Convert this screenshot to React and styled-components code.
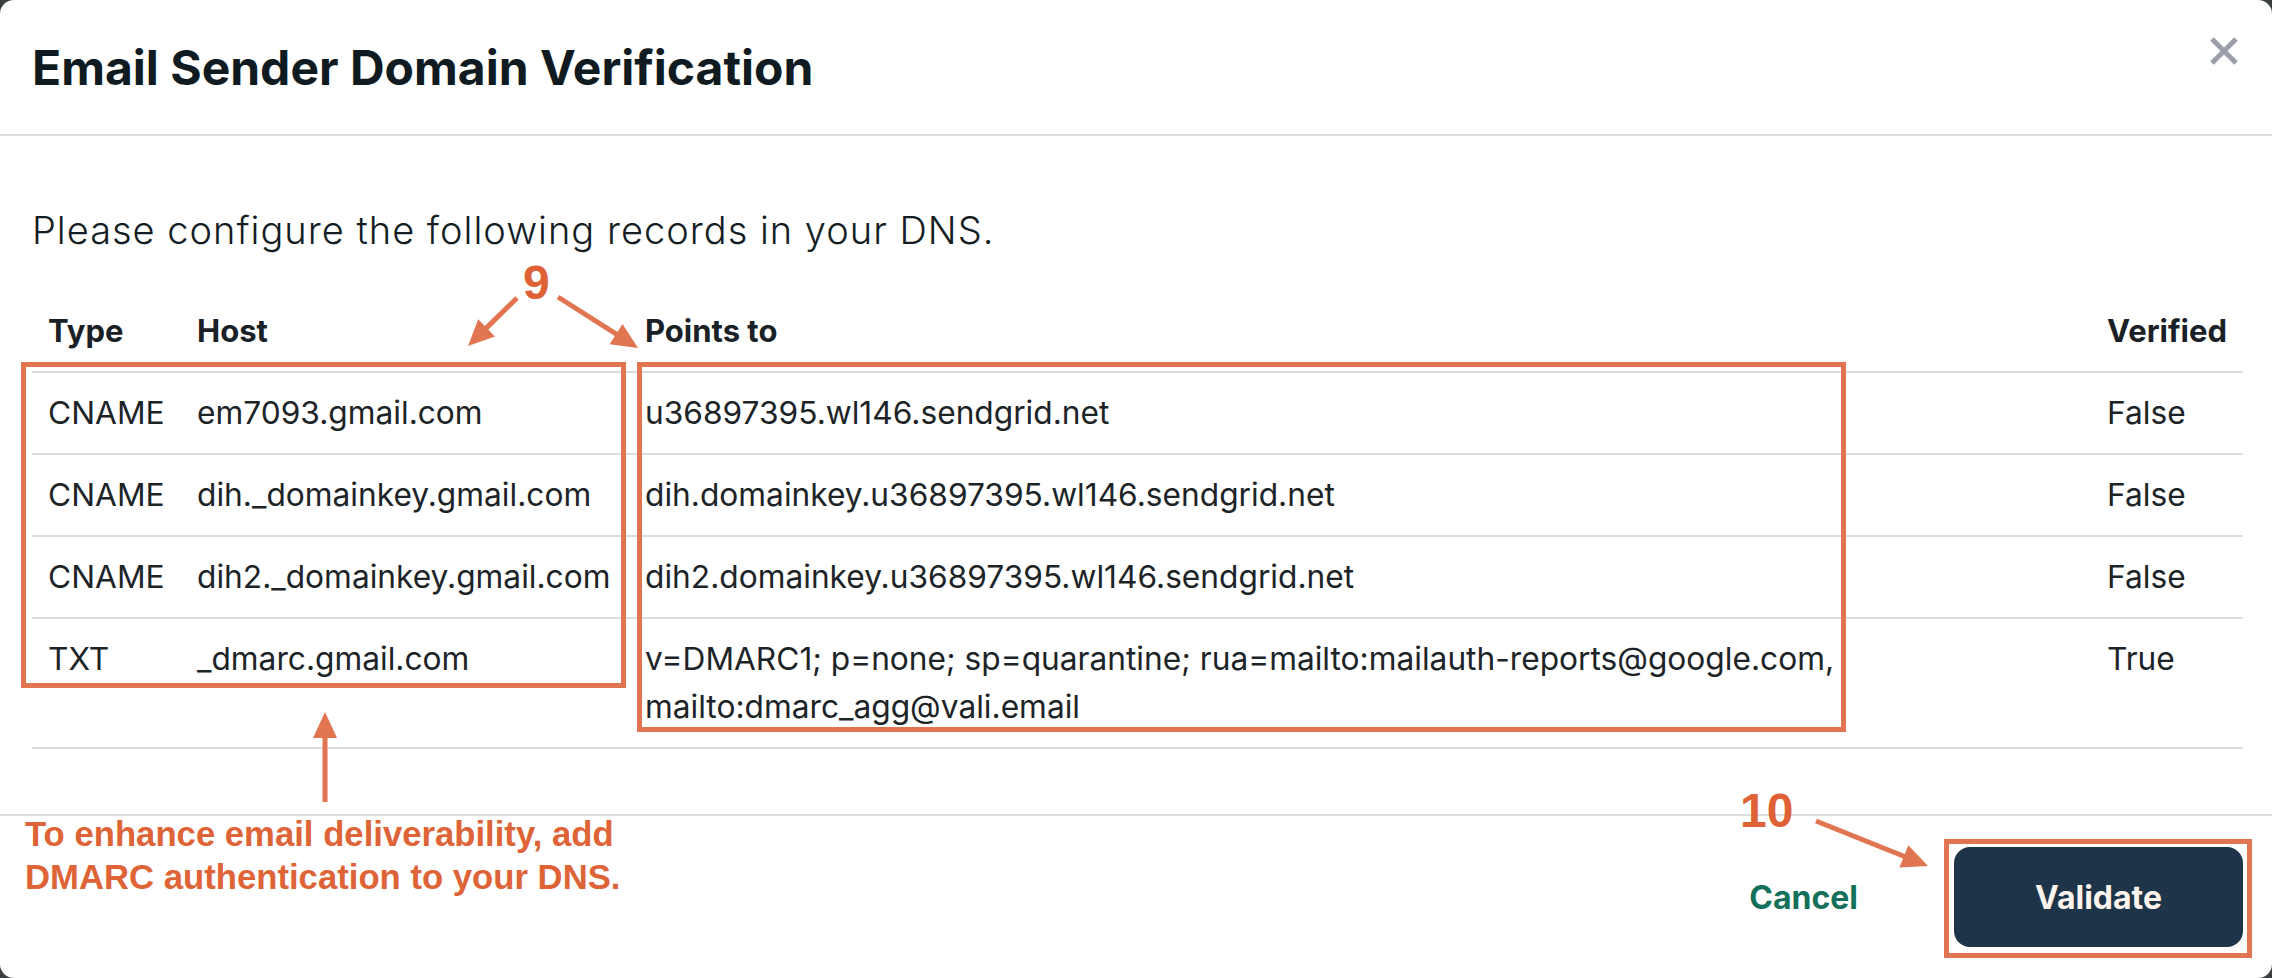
import React from 'react';
import styled, { createGlobalStyle } from 'styled-components';

const GlobalStyle = createGlobalStyle`
  html, body {
    margin: 0;
    padding: 0;
    background: #3a3d40;
  }
  body {
    font-family: Inter, "Noto Sans", sans-serif;
    -webkit-font-smoothing: antialiased;
  }
  * { box-sizing: border-box; }
`;

const Modal = styled.section`
  position: relative;
  width: 2272px;
  height: 978px;
  background: #ffffff;
  border-radius: 14px;
  overflow: hidden;
  display: flex;
  flex-direction: column;
  color: #1c2328;
`;

const Header = styled.header`
  display: flex;
  align-items: center;
  justify-content: space-between;
  height: 136px;
  flex: none;
  padding: 0 33px 0 32px;
  border-bottom: 2px solid #d9dde2;
`;

const Title = styled.h1`
  margin: 0;
  font-size: 48px;
  font-weight: 700;
  color: #0f1a21;
`;

const CloseButton = styled.button`
  align-self: flex-start;
  margin-top: 36px;
  width: 30px;
  height: 30px;
  padding: 0;
  border: 0;
  background: none;
  color: #9a9fa8;
  cursor: pointer;
  svg { display: block; }
`;

const Body = styled.div`
  flex: 1;
  padding: 67px 29px 0 32px;
`;

const Intro = styled.p`
  margin: 0 0 34px;
  font-size: 38px;
  line-height: 54px;
  font-weight: 300;
  letter-spacing: 1px;
  color: #141d24;
`;

const Table = styled.table`
  width: 2211px;
  border-collapse: collapse;
  table-layout: fixed;
  font-size: 31.7px;
  line-height: 48px;
`;

const HeadCell = styled.th`
  text-align: left;
  font-weight: 700;
  font-size: 31px;
  padding: 16px;
  border-bottom: 2px solid #d9dde2;
  color: #1a2126;
`;

const Cell = styled.td`
  padding: 16px;
  vertical-align: top;
  border-bottom: 2px solid #d9dde2;
  color: #1d2428;
  word-break: normal;
`;

const Footer = styled.footer`
  flex: none;
  height: 164px;
  display: flex;
  align-items: center;
  justify-content: flex-end;
  gap: 48px;
  padding: 0 29px 0 32px;
  border-top: 2px solid #d9dde2;
`;

const TextButton = styled.button`
  height: 100px;
  padding: 0 48px;
  border: 0;
  background: none;
  font-family: inherit;
  font-size: 32px;
  font-weight: 700;
  color: #13705b;
  cursor: pointer;
`;

const PrimaryButton = styled.button`
  width: 289px;
  height: 100px;
  border: 0;
  border-radius: 16px;
  background: #1e3549;
  font-family: inherit;
  font-size: 32px;
  font-weight: 700;
  color: #fdf4ee;
  cursor: pointer;
`;

/* callout layer drawn over the dialog */
const Callouts = styled.div`
  position: absolute;
  inset: 0;
  pointer-events: none;
  svg { position: absolute; left: 0; top: 0; }
`;

const StepNumber = styled.span`
  position: absolute;
  left: ${(p) => p.$x}px;
  top: ${(p) => p.$y}px;
  font-family: "Liberation Sans", Arial, sans-serif;
  font-weight: 700;
  font-size: 48px;
  line-height: 1;
  color: #de6235;
`;

const Note = styled.p`
  position: absolute;
  left: 25px;
  top: 813px;
  margin: 0;
  font-family: "Liberation Sans", Arial, sans-serif;
  font-weight: 700;
  font-size: 34.7px;
  line-height: 43px;
  color: #de6437;
`;

const ORANGE = '#e17551';

function Arrow({ x1, y1, x2, y2 }) {
  const dx = x2 - x1;
  const dy = y2 - y1;
  const len = Math.hypot(dx, dy);
  const ux = dx / len;
  const uy = dy / len;
  const head = 26;
  const half = 12;
  const bx = x2 - ux * head;
  const by = y2 - uy * head;
  const pts = [
    [x2, y2],
    [bx - uy * half, by + ux * half],
    [bx + uy * half, by - ux * half],
  ]
    .map((p) => p.join(','))
    .join(' ');
  return (
    <g>
      <line x1={x1} y1={y1} x2={bx + ux * 4} y2={by + uy * 4} stroke={ORANGE} strokeWidth="5" />
      <polygon points={pts} fill={ORANGE} />
    </g>
  );
}

const records = [
  { type: 'CNAME', host: 'em7093.gmail.com', target: 'u36897395.wl146.sendgrid.net', verified: 'False' },
  { type: 'CNAME', host: 'dih._domainkey.gmail.com', target: 'dih.domainkey.u36897395.wl146.sendgrid.net', verified: 'False' },
  { type: 'CNAME', host: 'dih2._domainkey.gmail.com', target: 'dih2.domainkey.u36897395.wl146.sendgrid.net', verified: 'False' },
  {
    type: 'TXT',
    host: '_dmarc.gmail.com',
    target: 'v=DMARC1; p=none; sp=quarantine; rua=mailto:mailauth-reports@google.com, mailto:dmarc_agg@vali.email',
    verified: 'True',
  },
];

export default function App() {
  return (
    <>
      <GlobalStyle />
      <Modal>
        <Header>
          <Title>Email Sender Domain Verification</Title>
          <CloseButton aria-label="Close">
            <svg width="30" height="30" viewBox="0 0 30 30">
              <path d="M3 3 L27 27 M27 3 L3 27" stroke="currentColor" strokeWidth="5" fill="none" />
            </svg>
          </CloseButton>
        </Header>

        <Body>
          <Intro>Please configure the following records in your DNS.</Intro>
          <Table>
            <colgroup>
              <col style={{ width: 149 }} />
              <col style={{ width: 448 }} />
              <col style={{ width: 1462 }} />
              <col style={{ width: 152 }} />
            </colgroup>
            <thead>
              <tr>
                <HeadCell>Type</HeadCell>
                <HeadCell>Host</HeadCell>
                <HeadCell>Points to</HeadCell>
                <HeadCell>Verified</HeadCell>
              </tr>
            </thead>
            <tbody>
              {records.map((r) => (
                <tr key={r.host}>
                  <Cell>{r.type}</Cell>
                  <Cell>{r.host}</Cell>
                  <Cell>{r.target}</Cell>
                  <Cell>{r.verified}</Cell>
                </tr>
              ))}
            </tbody>
          </Table>
        </Body>

        <Footer>
          <TextButton>Cancel</TextButton>
          <PrimaryButton>Validate</PrimaryButton>
        </Footer>

        <Callouts>
          <svg width="2272" height="978" viewBox="0 0 2272 978">
            <rect x="23.5" y="364.5" width="600" height="321" fill="none" stroke={ORANGE} strokeWidth="5" />
            <rect x="639.5" y="364.5" width="1204" height="365" fill="none" stroke={ORANGE} strokeWidth="5" />
            <rect x="1946.5" y="841.5" width="303" height="114" fill="none" stroke={ORANGE} strokeWidth="5" />
            <Arrow x1={517} y1={298} x2={468} y2={346} />
            <Arrow x1={558} y1={297} x2={638} y2={348} />
            <Arrow x1={325} y1={802} x2={325} y2={712} />
            <Arrow x1={1816} y1={821} x2={1928} y2={866} />
          </svg>
          <StepNumber $x={523} $y={259}>9</StepNumber>
          <StepNumber $x={1740} $y={787}>10</StepNumber>
          <Note>
            To enhance email deliverability, add
            <br />
            DMARC authentication to your DNS.
          </Note>
        </Callouts>
      </Modal>
    </>
  );
}
